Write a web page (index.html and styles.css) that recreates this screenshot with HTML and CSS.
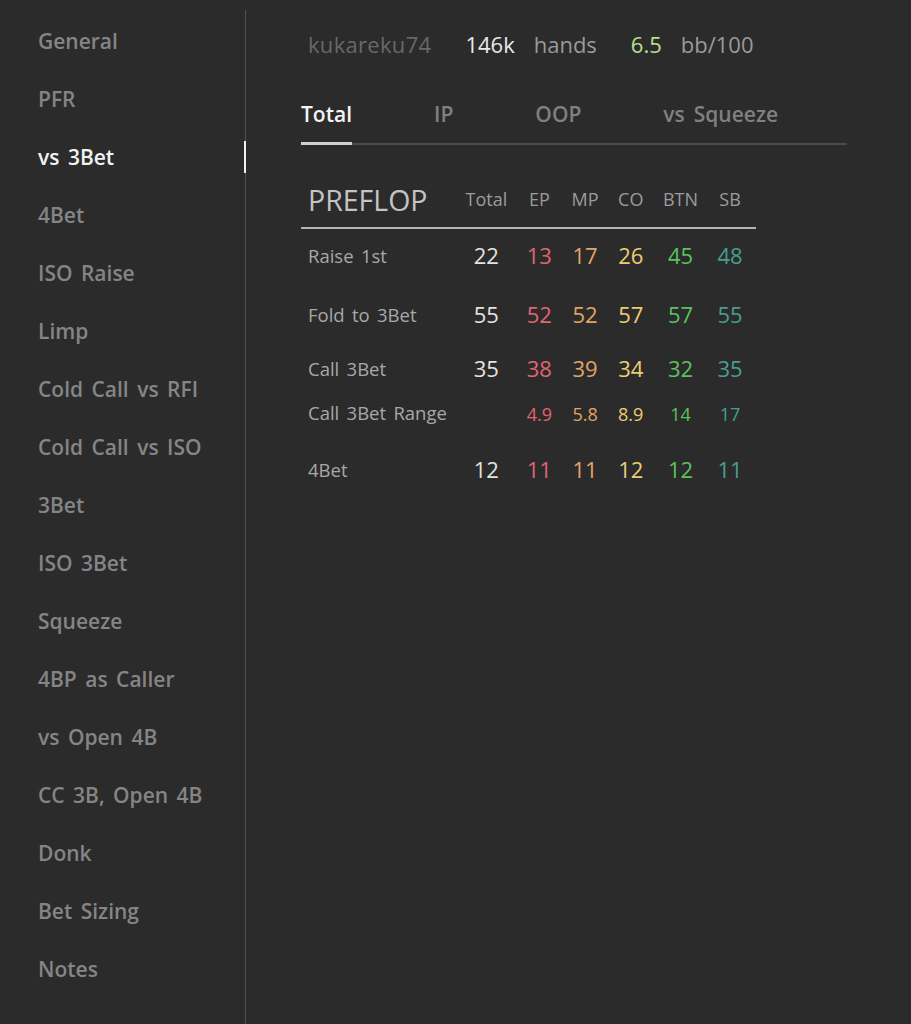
FILE: index.html
```html
<!DOCTYPE html>
<html>
<head>
<meta charset="utf-8">
<link rel="stylesheet" href="styles.css">
</head>
<body>
<div class="app">
  <nav class="sidebar">
    <div class="nav-item">General</div>
    <div class="nav-item">PFR</div>
    <div class="nav-item active">vs 3Bet</div>
    <div class="nav-item">4Bet</div>
    <div class="nav-item">ISO Raise</div>
    <div class="nav-item">Limp</div>
    <div class="nav-item">Cold Call vs RFI</div>
    <div class="nav-item">Cold Call vs ISO</div>
    <div class="nav-item">3Bet</div>
    <div class="nav-item">ISO 3Bet</div>
    <div class="nav-item">Squeeze</div>
    <div class="nav-item">4BP as Caller</div>
    <div class="nav-item">vs Open 4B</div>
    <div class="nav-item">CC 3B, Open 4B</div>
    <div class="nav-item">Donk</div>
    <div class="nav-item">Bet Sizing</div>
    <div class="nav-item">Notes</div>
  </nav>
  <main class="main">
    <div class="summary">
      <span class="player">kukareku74</span>
      <span class="pair"><span class="num">146k</span><span class="unit">hands</span></span>
      <span class="pair"><span class="num win">6.5</span><span class="unit">bb/100</span></span>
    </div>
    <div class="tabs">
      <div class="tab active">Total</div>
      <div class="tab">IP</div>
      <div class="tab">OOP</div>
      <div class="tab">vs Squeeze</div>
    </div>
    <div class="stats">
      <div class="title">PREFLOP</div>
      <div class="col-h">Total</div>
      <div class="col-h">EP</div>
      <div class="col-h">MP</div>
      <div class="col-h">CO</div>
      <div class="col-h">BTN</div>
      <div class="col-h">SB</div>
      <div class="rule"></div>

      <div class="label">Raise 1st</div>
      <div class="v t">22</div><div class="v ep">13</div><div class="v mp">17</div><div class="v co">26</div><div class="v btn">45</div><div class="v sb">48</div>

      <div class="label">Fold to 3Bet</div>
      <div class="v t">55</div><div class="v ep">52</div><div class="v mp">52</div><div class="v co">57</div><div class="v btn">57</div><div class="v sb">55</div>

      <div class="label">Call 3Bet</div>
      <div class="v t">35</div><div class="v ep">38</div><div class="v mp">39</div><div class="v co">34</div><div class="v btn">32</div><div class="v sb">35</div>

      <div class="label">Call 3Bet Range</div>
      <div class="v t small"></div><div class="v ep small">4.9</div><div class="v mp small">5.8</div><div class="v co small">8.9</div><div class="v btn small">14</div><div class="v sb small">17</div>

      <div class="label">4Bet</div>
      <div class="v t">12</div><div class="v ep">11</div><div class="v mp">11</div><div class="v co">12</div><div class="v btn">12</div><div class="v sb">11</div>
    </div>
  </main>
</div>
</body>
</html>
```

FILE: styles.css
```css
html, body {
  margin: 0;
  padding: 0;
  background: #2b2b2b;
  height: 100%;
}
body {
  font-family: "Open Sans", "Noto Sans", sans-serif;
  color: #8a8a8a;
}
.app {
  display: flex;
  min-height: 1024px;
}
.sidebar {
  width: 246px;
  margin-top: 10px;
  padding-top: 2px;
  border-right: 1px solid #505050;
  box-sizing: border-box;
  flex: none;
}
.nav-item {
  position: relative;
  height: 58px;
  line-height: 58px;
  padding-left: 38px;
  font-size: 21px;
  font-weight: 600;
  color: #858585;
  word-spacing: 3px;
  white-space: nowrap;
}
.nav-item.active {
  color: #f2f2f2;
}
.nav-item.active::after {
  content: "";
  position: absolute;
  right: -1px;
  top: 13px;
  width: 2px;
  height: 32px;
  background: #f0f0f0;
}
.main {
  padding-left: 55px;
  padding-top: 28px;
  flex: 1;
}
.summary {
  display: flex;
  align-items: center;
  height: 32px;
  padding-left: 7px;
  font-size: 22px;
  gap: 34px;
}
.player { color: #686868; letter-spacing: 0.3px; }
.pair { display: flex; gap: 19px; }
.num { color: #e8e8e8; }
.num.win { color: #b8e08c; }
.unit { color: #9a9a9a; }
.tabs {
  display: flex;
  gap: 82px;
  width: 546px;
  margin-top: 37px;
  border-bottom: 2px solid #4c4c4c;
}
.tab {
  font-size: 21px;
  font-weight: 600;
  color: #808080;
  height: 46px;
  line-height: 34px;
  word-spacing: 3.5px;
  position: relative;
}
.tab.active {
  color: #f4f4f4;
}
.tab.active::after {
  content: "";
  position: absolute;
  left: 0;
  right: 0;
  bottom: -2px;
  height: 3px;
  background: #d0d0d0;
}
.stats {
  display: grid;
  grid-template-columns: 138px repeat(6, auto);
  grid-template-rows: 56px 2px 52px 66px 42px 46px 68px;
  column-gap: 19.5px;
  align-items: center;
  width: fit-content;
  margin-top: 26px;
  padding: 0 13px 0 7px;
}
.title {
  font-size: 28.5px;
  color: #c4c4c4;
  padding-top: 2px;
}
.col-h {
  font-size: 18px;
  color: #9c9c9c;
  text-align: center;
}
.rule {
  grid-column: 1 / -1;
  height: 2px;
  background: #b4b4b4;
  margin: 0 -13px 0 -7px;
}
.label {
  font-size: 18.5px;
  color: #a8a8a8;
  word-spacing: 2.5px;
  white-space: nowrap;
}
.v {
  font-size: 22px;
  text-align: center;
}
.v.small { font-size: 18px; padding-top: 4px; }
.t { color: #e2e2e2; }
.ep { color: #e06470; }
.mp { color: #e3a366; }
.co { color: #efcc74; }
.btn { color: #5cc25c; }
.sb { color: #489e8c; }
```
